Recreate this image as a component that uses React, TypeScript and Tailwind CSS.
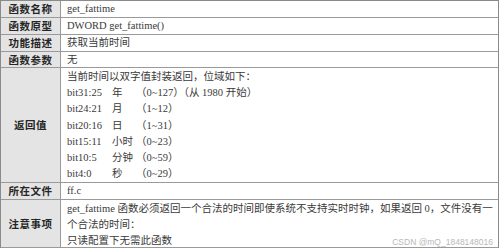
const serif = "font-['Liberation_Serif','Noto_Sans_CJK_SC',serif]"

const bits: [string, string, string][] = [
  ['bit31:25', '年', '（0~127）（从 1980 开始）'],
  ['bit24:21', '月', '（1~12）'],
  ['bit20:16', '日', '（1~31）'],
  ['bit15:11', '小时', '（0~23）'],
  ['bit10:5', '分钟', '（0~59）'],
  ['bit4:0', '秒', '（0~29）'],
]

function Label({ children }: { children: React.ReactNode }) {
  return (
    <div className="flex items-center justify-center bg-[#e4e4e4] border-r border-b border-[#9a9a9a] text-[10.5px] font-semibold text-[#262626] font-['Noto_Sans_CJK_SC',sans-serif] tracking-[0.5px]">
      {children}
    </div>
  )
}

function Value({ children, className = '' }: { children: React.ReactNode; className?: string }) {
  return (
    <div className={`border-b border-[#9a9a9a] pl-[6px] text-[10.5px] text-[#3a3a3a] ${serif} ${className}`}>
      {children}
    </div>
  )
}

export default function App() {
  return (
    <div className="w-[500px] h-[250px] bg-white relative overflow-hidden">
      <div className="w-[499px] border-t border-l border-r border-[#8a8a8a] grid grid-cols-[60px_1fr] grid-rows-[17px_17px_17px_16px_115px_17px_48px]">
        <Label>函数名称</Label>
        <Value className="leading-[16px]">get_fattime</Value>

        <Label>函数原型</Label>
        <Value className="leading-[16px]">DWORD get_fattime()</Value>

        <Label>功能描述</Label>
        <Value className="leading-[16px]">获取当前时间</Value>

        <Label>函数参数</Label>
        <Value className="leading-[15px]">无</Value>

        <Label>返回值</Label>
        <Value className="pt-[1px] leading-[16.2px]">
          <div>当前时间以双字值封装返回，位域如下：</div>
          {bits.map(([b, unit, range]) => (
            <div key={b} className="flex whitespace-nowrap">
              <span className="w-[45px]">{b}</span>
              <span className="w-[24px]">{unit}</span>
              <span>{range}</span>
            </div>
          ))}
        </Value>

        <Label>所在文件</Label>
        <Value className="leading-[16px]">ff.c</Value>

        <Label>注意事项</Label>
        <Value className="leading-[16px] pt-[1px] whitespace-nowrap">
          <div>get_fattime 函数必须返回一个合法的时间即使系统不支持实时时钟，如果返回 0，文件没有一</div>
          <div>个合法的时间：</div>
          <div>只读配置下无需此函数</div>
        </Value>
      </div>

      {/* watermark */}
      <div className="absolute right-[7px] top-[236px] text-[8.5px] text-[#b8b8b8] font-['Liberation_Sans',sans-serif]">
        CSDN @mQ_1848148016
      </div>
    </div>
  )
}
